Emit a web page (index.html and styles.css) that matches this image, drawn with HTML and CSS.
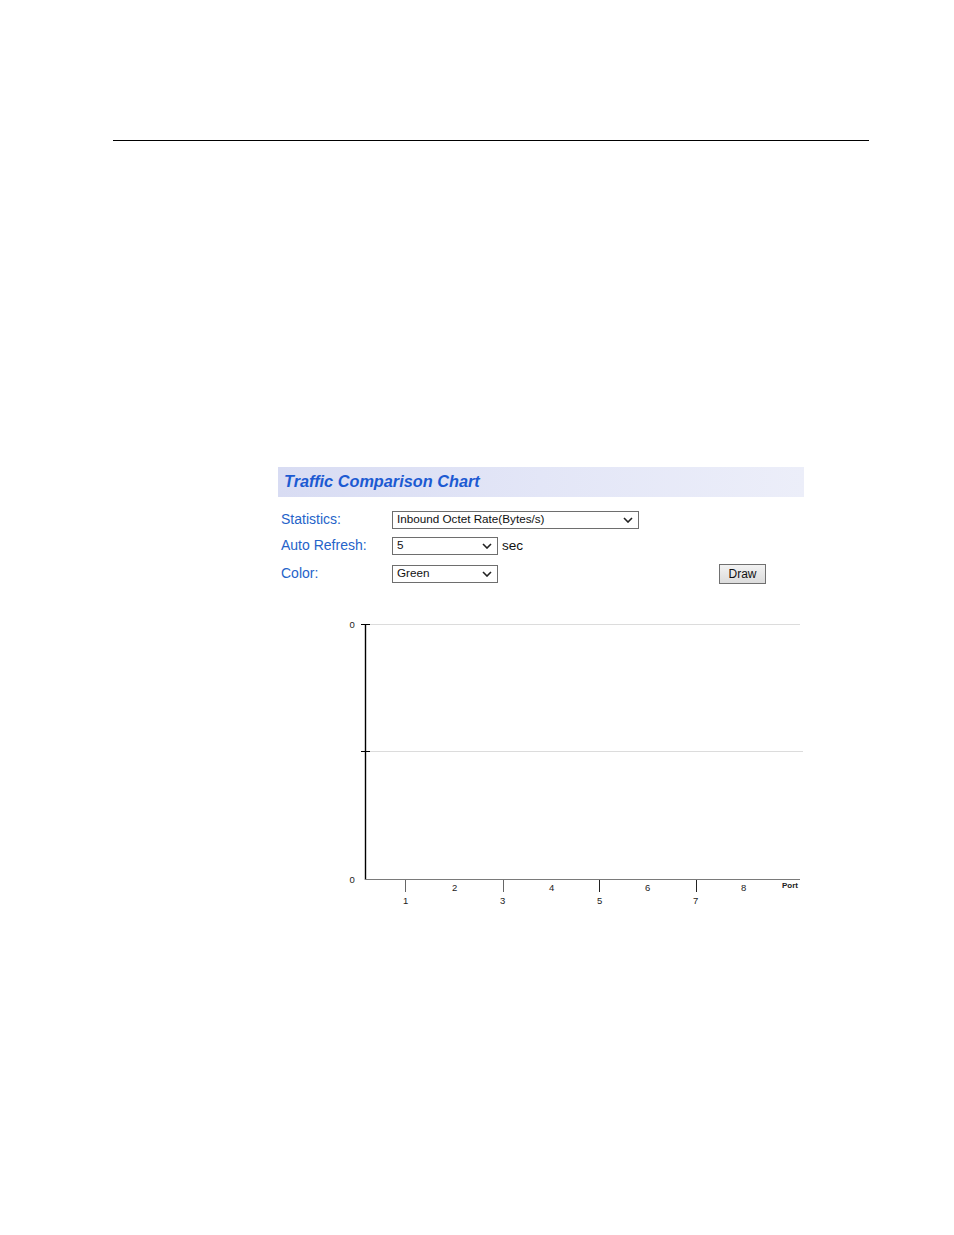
FILE: index.html
```html
<!DOCTYPE html>
<html>
<head>
<meta charset="utf-8">
<link rel="stylesheet" href="styles.css">
</head>
<body>
<div class="page">
  <div class="rule"></div>
  <div class="panel">
    <div class="header"><span class="title">Traffic Comparison Chart</span></div>
    <div class="form">
      <div class="row row1">
        <div class="label">Statistics:</div>
        <div class="select wide"><span class="val">Inbound Octet Rate(Bytes/s)</span>
          <svg class="chev" width="10" height="6" viewBox="0 0 10 6"><path d="M1 1 L5 5 L9 1" fill="none" stroke="#222" stroke-width="1.6"/></svg></div>
      </div>
      <div class="row row2">
        <div class="label">Auto Refresh:</div>
        <div class="select narrow"><span class="val">5</span>
          <svg class="chev" width="10" height="6" viewBox="0 0 10 6"><path d="M1 1 L5 5 L9 1" fill="none" stroke="#222" stroke-width="1.6"/></svg></div>
        <div class="unit">sec</div>
      </div>
      <div class="row row3">
        <div class="label">Color:</div>
        <div class="select narrow"><span class="val">Green</span>
          <svg class="chev" width="10" height="6" viewBox="0 0 10 6"><path d="M1 1 L5 5 L9 1" fill="none" stroke="#222" stroke-width="1.6"/></svg></div>
        <div class="button">Draw</div>
      </div>
    </div>
    <svg class="chart" width="466" height="300" viewBox="340 610 466 300">
      <line x1="370" y1="624.5" x2="800" y2="624.5" stroke="#dcdcdc" stroke-width="1"/>
      <line x1="361" y1="751.5" x2="803" y2="751.5" stroke="#dcdcdc" stroke-width="1"/>
      <line x1="361" y1="624.5" x2="370" y2="624.5" stroke="#000" stroke-width="1"/>
      <line x1="361" y1="751.5" x2="370" y2="751.5" stroke="#000" stroke-width="1"/>
      <line x1="365.5" y1="624" x2="365.5" y2="880" stroke="#000" stroke-width="1.4"/>
      <line x1="365" y1="879.5" x2="800" y2="879.5" stroke="#7a7a7a" stroke-width="1"/>
      <line x1="405.5" y1="880" x2="405.5" y2="892" stroke="#666" stroke-width="1"/>
      <line x1="503.5" y1="880" x2="503.5" y2="892" stroke="#666" stroke-width="1"/>
      <line x1="599.5" y1="880" x2="599.5" y2="892" stroke="#222" stroke-width="1"/>
      <line x1="696.5" y1="880" x2="696.5" y2="892" stroke="#222" stroke-width="1"/>
      <g class="ax">
        <text x="349.5" y="628">0</text>
        <text x="349.5" y="883">0</text>
        <text x="403" y="904">1</text>
        <text x="500" y="904">3</text>
        <text x="597" y="904">5</text>
        <text x="693" y="904">7</text>
        <text x="452" y="891">2</text>
        <text x="549" y="891">4</text>
        <text x="645" y="891">6</text>
        <text x="741" y="891">8</text>
        <text x="782" y="888" class="port">Port</text>
      </g>
    </svg>
  </div>
</div>
</body>
</html>
```

FILE: styles.css
```css
html, body {
  margin: 0;
  padding: 0;
  background: #ffffff;
}
.page {
  padding-top: 140px;
  font-family: "Liberation Sans", Arial, sans-serif;
}
.rule {
  margin-left: 113px;
  width: 756px;
  height: 0;
  border-top: 1px solid #000;
}
.panel {
  margin-left: 278px;
  margin-top: 326px;
  width: 526px;
}
.header {
  box-sizing: border-box;
  height: 30px;
  padding-bottom: 2px;
  background: linear-gradient(to right, #d8dcf3 0%, #e3e6f7 50%, #eceef9 100%);
  display: flex;
  align-items: center;
}
.title {
  padding-left: 6px;
  font-size: 16.3px;
  font-weight: bold;
  font-style: italic;
  color: #1c5ad2;
}
.form {
  margin-top: 14px;
}
.row {
  display: flex;
  align-items: center;
  height: 18px;
}
.row2 { margin-top: 8px; }
.row3 { margin-top: 10px; }
.label {
  width: 111px;
  padding-left: 3px;
  font-size: 14px;
  line-height: 16px;
  margin-top: -2px;
  color: #2563c9;
}
.select {
  box-sizing: border-box;
  height: 18px;
  border: 1px solid #6e6e6e;
  background: #fff;
  display: flex;
  align-items: center;
  justify-content: space-between;
  padding: 0 5px 0 4px;
  font-size: 11.7px;
  color: #111;
}
.val {
  line-height: 14px;
  margin-top: -3px;
}
.wide { width: 247px; }
.narrow { width: 106px; }
.chev { display: block; }
.unit {
  margin-left: 4px;
  font-size: 13.6px;
  margin-top: -2px;
  color: #111;
}
.button {
  margin-left: auto;
  margin-right: 38px;
  box-sizing: border-box;
  width: 47px;
  height: 20px;
  border: 1px solid #707070;
  background: linear-gradient(#f2f2f2, #dcdcdc);
  font-size: 12px;
  color: #111;
  display: flex;
  align-items: center;
  justify-content: center;
}
.chart {
  display: block;
  margin-top: 27px;
  margin-left: 62px;
  overflow: visible;
}
.ax text {
  font-family: "Liberation Sans", Arial, sans-serif;
  font-size: 9.5px;
  fill: #222;
}
.ax text.port {
  font-size: 8px;
  font-weight: bold;
}
```
